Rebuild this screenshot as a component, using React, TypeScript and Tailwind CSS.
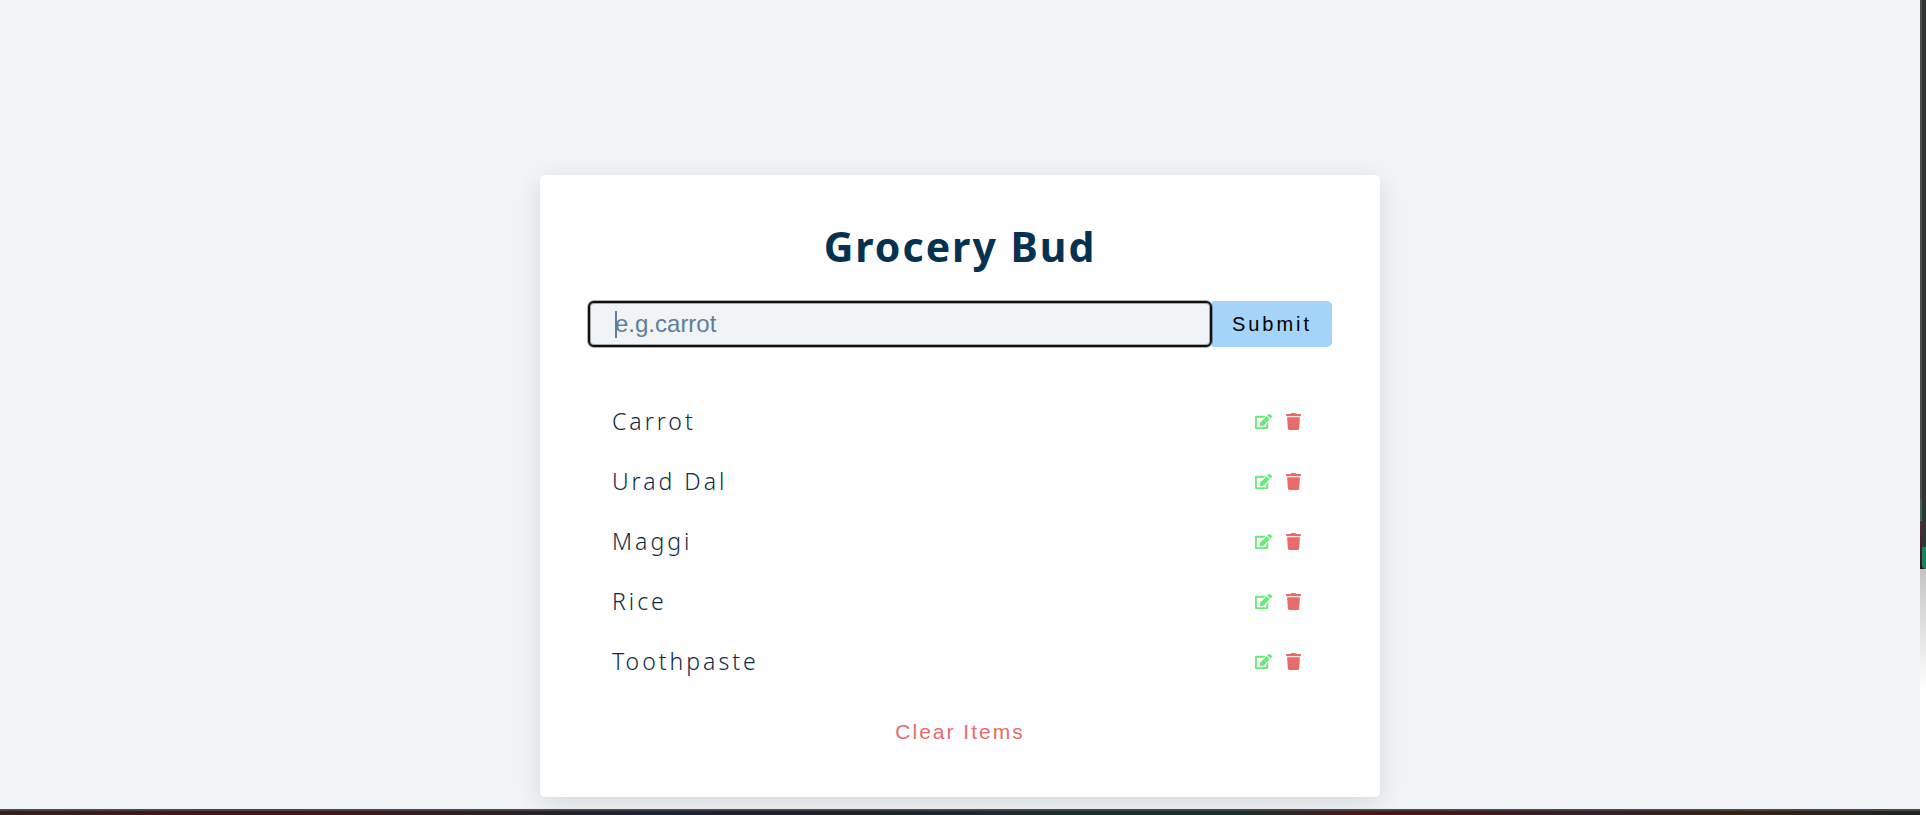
import { useState } from 'react';
import type { FormEvent } from 'react';
import { FaEdit, FaTrash } from 'react-icons/fa';

interface Item {
  id: number;
  title: string;
}

const initialItems: Item[] = [
  { id: 1, title: 'Carrot' },
  { id: 2, title: 'Urad Dal' },
  { id: 3, title: 'Maggi' },
  { id: 4, title: 'Rice' },
  { id: 5, title: 'Toothpaste' },
];

function GroceryRow({ item, onEdit, onRemove }: { item: Item; onEdit: () => void; onRemove: () => void }) {
  return (
    <li className="flex h-[60px] items-center justify-between px-6">
      <p className="font-['Noto_Sans','Open_Sans',sans-serif] text-[23px] leading-8 font-[350] tracking-[3px] text-[#102a42]">
        {item.title}
      </p>
      <div className="flex items-center gap-[13px] pr-1.5">
        <button type="button" aria-label={`Edit ${item.title}`} onClick={onEdit} className="cursor-pointer text-[17px] text-[#69e978]">
          <FaEdit />
        </button>
        <button type="button" aria-label={`Delete ${item.title}`} onClick={onRemove} className="cursor-pointer text-[17px] text-[#e66b6b]">
          <FaTrash />
        </button>
      </div>
    </li>
  );
}

export default function App() {
  const [items, setItems] = useState<Item[]>(initialItems);
  const [name, setName] = useState('');
  const [editId, setEditId] = useState<number | null>(null);

  const submit = (e: FormEvent) => {
    e.preventDefault();
    if (!name) return;
    if (editId !== null) {
      setItems(items.map((i) => (i.id === editId ? { ...i, title: name } : i)));
      setEditId(null);
    } else {
      setItems([...items, { id: Date.now(), title: name }]);
    }
    setName('');
  };

  return (
    <div className="flex min-h-screen bg-[#f0f4f7]">
      <div className="flex min-w-0 flex-1 flex-col">
        <main className="flex-1 overflow-hidden bg-[#f0f4f7] px-4 pt-[175px] pb-3">
          <section className="mx-auto w-full max-w-[840px] rounded-[5px] bg-white px-12 py-12 shadow-[0_6px_24px_rgba(0,0,0,0.11)]">
            <form onSubmit={submit}>
              <h3 className="mb-8 text-center font-['Noto_Sans','Open_Sans',sans-serif] text-[41px] leading-[46px] font-bold tracking-[2px] text-[#063251]">
                Grocery Bud
              </h3>
              <div className="flex h-[46px]">
                <div className="relative min-w-0 flex-1">
                  <input
                    type="text"
                    aria-label="Grocery item"
                    placeholder="e.g.carrot"
                    value={name}
                    onChange={(e) => setName(e.target.value)}
                    className="h-full w-full rounded-md border-2 border-[#101010] bg-[#f0f4f7] pl-[25px] font-['Liberation_Sans',Arial,sans-serif] text-2xl text-[#102a42] shadow-[0_0_0_1px_#10101055,inset_0_0_0_1px_#10101055] outline-none placeholder:text-[#617d98]"
                  />
                  {name === '' && <span aria-hidden="true" className="absolute top-[10px] left-[27px] h-[27px] w-[2px] bg-[#617d98]" />}
                </div>
                <button
                  type="submit"
                  className="w-[120px] cursor-pointer rounded-r-[5px] bg-[#a5d4f9] font-['Liberation_Sans',Arial,sans-serif] text-xl tracking-[3px] text-black"
                >
                  Submit
                </button>
              </div>
            </form>
            {items.length > 0 && (
              <div className="mt-11 flex flex-col">
                <ul>
                  {items.map((item) => (
                    <GroceryRow
                      key={item.id}
                      item={item}
                      onEdit={() => {
                        setEditId(item.id);
                        setName(item.title);
                      }}
                      onRemove={() => setItems(items.filter((i) => i.id !== item.id))}
                    />
                  ))}
                </ul>
                <button
                  type="button"
                  onClick={() => setItems([])}
                  className="mx-auto mt-6 h-[34px] cursor-pointer font-['Liberation_Sans',Arial,sans-serif] text-[21px] tracking-[2px] text-[#e66b6b]"
                >
                  Clear Items
                </button>
              </div>
            )}
          </section>
        </main>
        {/* Desktop backdrop below the window */}
        <div className="h-1.5 border-t-2 border-[#4a4646] bg-[linear-gradient(90deg,#33201a_0%,#4a121b_10%,#4a121b_16%,#2e201d_24%,#1a2338_34%,#1b2228_44%,#1a2a32_51%,#18302a_58%,#18302a_65%,#531317_71%,#4a1518_76%,#33202a_83%,#38200f_90%,#1c2422_100%)]" />
      </div>
      {/* Desktop backdrop and neighbouring window at the right edge */}
      <div className="flex w-1.5 flex-col bg-white">
        <div className="flex h-[569px] bg-[#3a141c]">
          <div className="w-0.5 bg-[linear-gradient(#4a4e50_0,#4a4e50_499px,#35695a_499px,#35695a_521px,#553038_521px,#3a141c_100%)]" />
          <div className="flex flex-1 flex-col">
            <div className="flex-1 bg-[#333535]" />
            <div className="h-[22px] rounded-bl-md bg-[#158560]" />
          </div>
        </div>
        <div className="h-[120px] bg-linear-to-b from-[#c4c4c4] to-white" />
      </div>
    </div>
  );
}
